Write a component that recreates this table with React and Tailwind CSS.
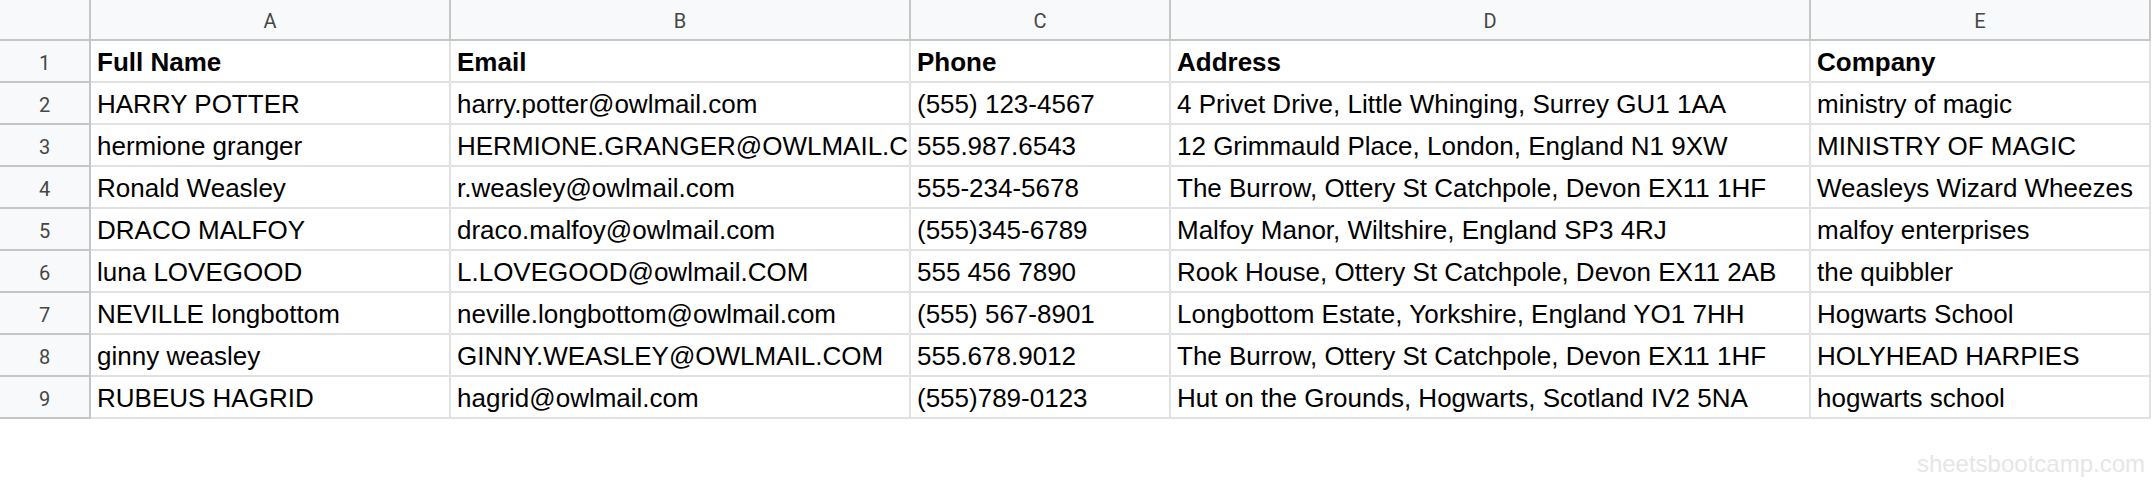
import React from "react";

const COLS = [
  { key: "A", w: "w-[360px]" },
  { key: "B", w: "w-[460px]" },
  { key: "C", w: "w-[260px]" },
  { key: "D", w: "w-[640px]" },
  { key: "E", w: "w-[340px]" },
];

const ROWS = [
  ["Full Name", "Email", "Phone", "Address", "Company"],
  ["HARRY POTTER", "harry.potter@owlmail.com", "(555) 123-4567", "4 Privet Drive, Little Whinging, Surrey GU1 1AA", "ministry of magic"],
  ["hermione granger", "HERMIONE.GRANGER@OWLMAIL.COM", "555.987.6543", "12 Grimmauld Place, London, England N1 9XW", "MINISTRY OF MAGIC"],
  ["Ronald Weasley", "r.weasley@owlmail.com", "555-234-5678", "The Burrow, Ottery St Catchpole, Devon EX11 1HF", "Weasleys Wizard Wheezes"],
  ["DRACO MALFOY", "draco.malfoy@owlmail.com", "(555)345-6789", "Malfoy Manor, Wiltshire, England SP3 4RJ", "malfoy enterprises"],
  ["luna LOVEGOOD", "L.LOVEGOOD@owlmail.COM", "555 456 7890", "Rook House, Ottery St Catchpole, Devon EX11 2AB", "the quibbler"],
  ["NEVILLE longbottom", "neville.longbottom@owlmail.com", "(555) 567-8901", "Longbottom Estate, Yorkshire, England YO1 7HH", "Hogwarts School"],
  ["ginny weasley", "GINNY.WEASLEY@OWLMAIL.COM", "555.678.9012", "The Burrow, Ottery St Catchpole, Devon EX11 1HF", "HOLYHEAD HARPIES"],
  ["RUBEUS HAGRID", "hagrid@owlmail.com", "(555)789-0123", "Hut on the Grounds, Hogwarts, Scotland IV2 5NA", "hogwarts school"],
];

const headFont = { fontFamily: "Roboto, 'Liberation Sans', sans-serif" };
const cellFont = { fontFamily: "'Liberation Sans', Arial, sans-serif" };

export default function App() {
  return (
    <div className="w-[2154px] h-[484px] bg-white overflow-hidden">
      {/* column letters */}
      <div className="flex h-[41px]" style={headFont}>
        <div className="w-[91px] shrink-0 bg-[#f8f9fa] border-r-2 border-b-2 border-[#c4c7c5]" />
        {COLS.map((c) => (
          <div
            key={c.key}
            className={`${c.w} shrink-0 bg-[#f8f9fa] border-r-2 border-b-2 border-[#c4c7c5] flex items-center justify-center text-[20px] leading-[20px] text-[#444746] pt-[2px]`}
          >
            {c.key}
          </div>
        ))}
      </div>

      {/* rows */}
      {ROWS.map((row, i) => (
        <div key={i} className="flex h-[42px]">
          <div
            className="w-[91px] shrink-0 bg-[#f8f9fa] border-r-2 border-b-2 border-[#c4c7c5] flex items-center justify-center text-[20px] leading-[20px] text-[#444746] pt-[4px]"
            style={headFont}
          >
            {i + 1}
          </div>
          {row.map((v, j) => (
            <div
              key={j}
              className={`${COLS[j].w} shrink-0 border-r-2 border-b-2 border-[#e1e1e1] flex items-end pl-[6px] pb-[6px] overflow-hidden whitespace-nowrap text-[26px] leading-[26px] text-black ${i === 0 ? "font-bold" : ""}`}
              style={cellFont}
            >
              {v}
            </div>
          ))}
        </div>
      ))}

      {/* watermark */}
      <div className="flex justify-end pr-[9px] pt-[33px]">
        <span className="text-[24px] leading-[24px] text-[#e6e6e6]" style={cellFont}>
          sheetsbootcamp.com
        </span>
      </div>
    </div>
  );
}
